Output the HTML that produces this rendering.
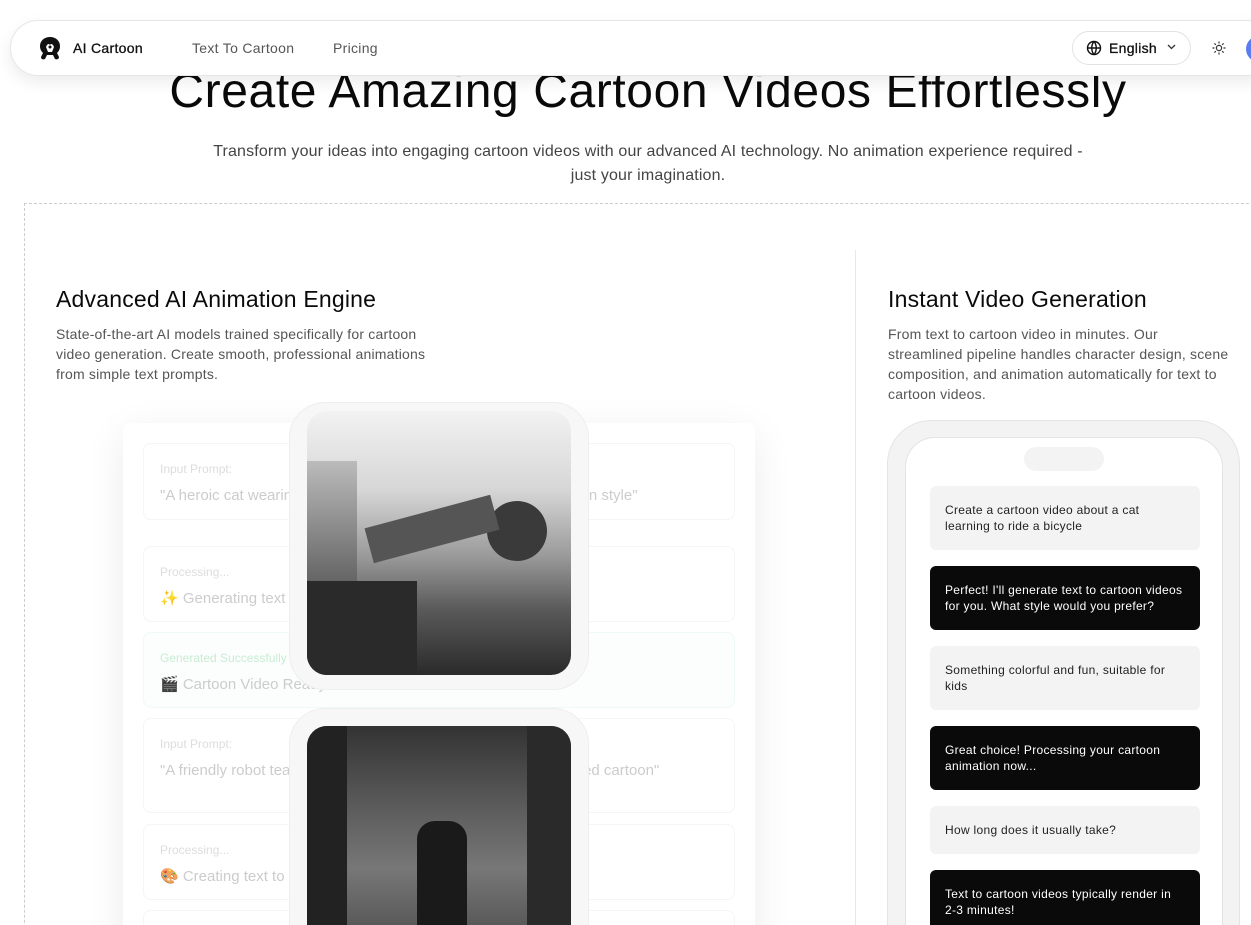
<!DOCTYPE html>
<html><head><meta charset="utf-8"><style>
*{box-sizing:border-box;margin:0;padding:0}
html,body{width:1251px;height:925px;overflow:hidden}
body{background:#fff;font-family:"Liberation Sans",sans-serif;color:#111;position:relative}
.wrap{position:absolute;left:0;top:0;width:1251px;height:925px;overflow:hidden}
.abs{position:absolute}
.nav{left:10px;top:20px;width:1300px;height:56px;border:1px solid #e6e6e6;border-radius:28px;background:#fff;box-shadow:0 6px 16px rgba(0,0,0,.08);z-index:5}
.nav span{position:absolute;top:19px;font-size:14px}
h1{position:absolute;left:0;width:1296px;top:64px;text-align:center;font-size:48px;font-weight:400;letter-spacing:0.6px;color:#0a0a0a}
.sub{left:200px;width:896px;top:140px;text-align:center;font-size:16px;line-height:24px;color:#444;letter-spacing:0.15px;padding:0 4px}
.dash{left:24px;top:203px;width:1300px;height:800px;border-left:1px dashed #ccc;border-top:1px dashed #ccc}
.div{left:855px;top:250px;width:1px;height:700px;background:#e8e8e8}
h2{position:absolute;font-size:23px;font-weight:400;color:#0a0a0a;letter-spacing:0.2px}
.p{font-size:14px;line-height:20px;color:#555;letter-spacing:0.2px}
.card{left:123px;top:423px;width:632px;height:600px;background:#fff;box-shadow:0 10px 40px rgba(0,0,0,.08);border-radius:8px}
.it{position:absolute;left:20px;width:592px;border:1px solid #f5f5f5;border-radius:8px;background:#fff}
.it .l{position:absolute;left:16px;top:18px;font-size:12px;color:#ddd}
.it .t{position:absolute;left:16px;top:42px;font-size:15px;color:#ccc;line-height:20px}
.fr{left:289px;width:300px;border:1px solid #eee;background:#f7f7f7;border-radius:36px}
.img{position:absolute;left:17px;width:264px;border-radius:20px;overflow:hidden}
.phone{left:887px;top:420px;width:353px;height:600px;border:1px solid #e4e4e4;border-radius:44px;background:#f3f3f3}
.scr{position:absolute;left:17px;top:16px;width:318px;height:600px;background:#fff;border:1px solid #e4e4e4;border-radius:30px}
.b{position:absolute;left:24px;width:270px;border-radius:6px;font-size:12px;line-height:16px;padding:0 16px 0 15px;display:flex;align-items:center;letter-spacing:0.3px}
.g{background:#f3f3f3;color:#222}
.k{background:#0a0a0a;color:#fff}
</style></head><body><div class="wrap">
<div class="abs nav">
<svg class="abs" style="left:25px;top:14px" width="28" height="28" viewBox="0 0 28 28"><path d="M14 2C8 2 4 6 4 11c0 3 1 5 3 7l-2 4c0 2 2 3 4 2l2-4h6l2 4c2 1 4 0 4-2l-2-4c2-2 3-4 3-7 0-5-4-9-10-9z" fill="#111"/><path d="M10 12c1-3 3-4 4-2 1-2 3-1 4 2l-2 5h-4z" fill="#fff"/><circle cx="14" cy="12" r="1.5" fill="#111"/></svg>
<span style="left:62px;color:#111;letter-spacing:0.3px;-webkit-text-stroke:0.3px #111">AI Cartoon</span>
<span style="left:181px;color:#555;letter-spacing:0.3px">Text To Cartoon</span>
<span style="left:322px;color:#555;letter-spacing:0.3px">Pricing</span>
<div class="abs" style="left:1061px;top:10px;width:119px;height:34px;border:1px solid #e2e2e2;border-radius:17px"></div>
<svg class="abs" style="left:1075px;top:19px" width="16" height="16" viewBox="0 0 16 16" fill="none" stroke="#111" stroke-width="1.4"><circle cx="8" cy="8" r="6.5"/><path d="M1.5 8h13M8 1.5c-3 3.5-3 9.5 0 13M8 1.5c3 3.5 3 9.5 0 13"/></svg>
<span style="left:1098px;color:#111;letter-spacing:0.3px;-webkit-text-stroke:0.3px #111">English</span>
<svg class="abs" style="left:1156px;top:23px" width="9" height="6" viewBox="0 0 9 6" fill="none" stroke="#333" stroke-width="1.3"><path d="M1 1l3.5 3.5L8 1"/></svg>
<svg class="abs" style="left:1201px;top:20px" width="14" height="14" viewBox="0 0 14 14" fill="none" stroke="#333" stroke-width="1.2"><circle cx="7" cy="7" r="2.6"/><path d="M7 .5v2M7 11.5v2M.5 7h2M11.5 7h2M2.4 2.4l1.4 1.4M10.2 10.2l1.4 1.4M2.4 11.6l1.4-1.4M10.2 3.8l1.4-1.4"/></svg>
<div class="abs" style="left:1235px;top:15px;width:26px;height:26px;border-radius:13px;background:#5b7cf0"></div>
</div>
<h1>Create Amazing Cartoon Videos Effortlessly</h1>
<div class="abs sub">Transform your ideas into engaging cartoon videos with our advanced AI technology. No animation experience required - just your imagination.</div>
<div class="abs dash"></div>
<div class="abs div"></div>
<h2 style="left:56px;top:286px">Advanced AI Animation Engine</h2>
<div class="abs p" style="left:56px;top:324px;width:385px">State-of-the-art AI models trained specifically for cartoon video generation. Create smooth, professional animations from simple text prompts.</div>
<h2 style="left:888px;top:286px">Instant Video Generation</h2>
<div class="abs p" style="left:888px;top:324px;width:345px">From text to cartoon video in minutes. Our streamlined pipeline handles character design, scene composition, and animation automatically for text to cartoon videos.</div>
<div class="abs card">
<div class="it" style="top:20px;height:77px"><div class="l">Input Prompt:</div><div class="t">"A heroic cat wearing a cape flying over the city at sunset, cartoon style"</div></div>
<div class="it" style="top:123px;height:76px"><div class="l">Processing...</div><div class="t">✨ Generating text to cartoon video...</div></div>
<div class="it" style="top:209px;height:76px;background:#fbfefc;border-color:#eefaf2"><div class="l" style="color:#c9ecd4">Generated Successfully</div><div class="t">🎬 Cartoon Video Ready</div></div>
<div class="it" style="top:295px;height:95px"><div class="l">Input Prompt:</div><div class="t">"A friendly robot teaching kids to play on the playground, animated cartoon"</div></div>
<div class="it" style="top:401px;height:76px"><div class="l">Processing...</div><div class="t">🎨 Creating text to cartoon...</div></div>
<div class="it" style="top:487px;height:76px"></div>
</div>
<div class="abs fr" style="top:402px;height:288px"><div class="img" style="top:8px;height:264px;background:linear-gradient(180deg,#f2f2f2 0%,#d6d6d6 30%,#9a9a9a 55%,#5a5a5a 75%,#2a2a2a 100%)"><div class="abs" style="left:0;top:50px;width:50px;height:214px;background:linear-gradient(#bbb,#222)"></div><div class="abs" style="left:0;top:170px;width:110px;height:94px;background:#2a2a2a"></div><div class="abs" style="left:180px;top:90px;width:60px;height:60px;border-radius:30px;background:#3a3a3a"></div><div class="abs" style="left:60px;top:100px;width:130px;height:36px;background:#555;transform:rotate(-15deg)"></div></div></div>
<div class="abs fr" style="top:708px;height:300px"><div class="img" style="top:17px;height:260px;background:linear-gradient(180deg,#333 0%,#5a5a5a 30%,#777 55%,#3a3a3a 100%)"><div class="abs" style="left:110px;top:95px;width:50px;height:110px;background:#1a1a1a;border-radius:18px 18px 0 0"></div><div class="abs" style="left:0;top:0;width:40px;height:260px;background:#222"></div><div class="abs" style="left:220px;top:0;width:44px;height:260px;background:#2a2a2a"></div></div></div>
<div class="abs phone"><div class="scr">
<div class="abs" style="left:118px;top:9px;width:80px;height:24px;border-radius:12px;background:#f3f3f3"></div>
<div class="b g" style="top:48px;height:64px">Create a cartoon video about a cat learning to ride a bicycle</div>
<div class="b k" style="top:128px;height:64px">Perfect! I'll generate text to cartoon videos for you. What style would you prefer?</div>
<div class="b g" style="top:208px;height:64px">Something colorful and fun, suitable for kids</div>
<div class="b k" style="top:288px;height:64px">Great choice! Processing your cartoon animation now...</div>
<div class="b g" style="top:368px;height:48px">How long does it usually take?</div>
<div class="b k" style="top:432px;height:64px">Text to cartoon videos typically render in 2-3 minutes!</div>
</div></div>
</div></body></html>
